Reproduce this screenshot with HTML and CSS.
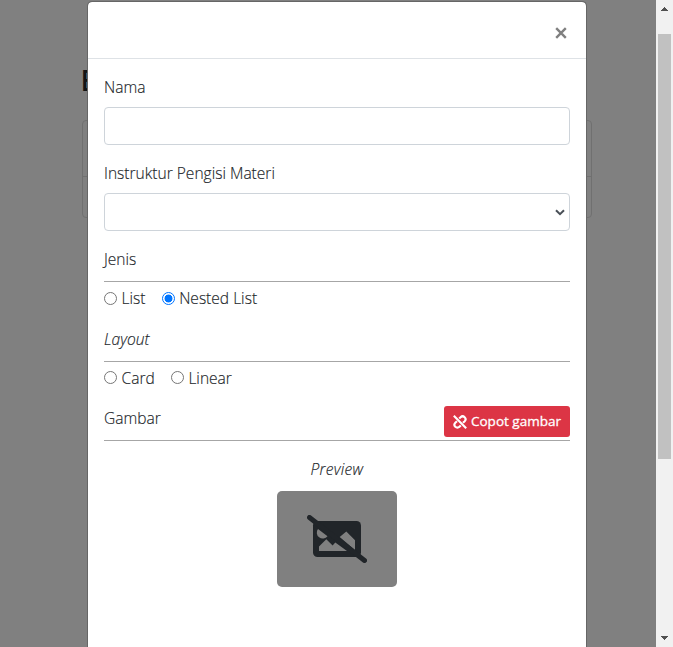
FILE: index.html
```html
<!DOCTYPE html>
<html lang="id">
<head>
<meta charset="utf-8">
<title>Materi</title>
<link rel="stylesheet" href="styles.css">
</head>
<body>
<div class="page">
  <main class="content">
    <h1 class="title">B</h1>
    <section class="card"><div class="card-header"></div></section>
  </main>
  <div class="scrollbar">
    <svg class="arrow" viewBox="0 0 7 4" shape-rendering="crispEdges"><path d="M3 0h1v1h1v1h1v1h1v1H0V3h1V2h1V1h1z"/></svg>
    <div class="track"><div class="thumb"></div></div>
    <svg class="arrow" viewBox="0 0 7 4" shape-rendering="crispEdges"><path d="M0 0h7v1H6v1H5v1H4v1H3V3H2V2H1V1H0z"/></svg>
  </div>
</div>
<div class="modal">
  <header class="modal-header">
    <button class="close" aria-label="Tutup"><svg viewBox="0 0 12 12"><path d="M1.200 1.200l9.600 9.600M10.800 1.200l-9.600 9.600"/></svg></button>
  </header>
  <form class="modal-body">
    <div class="group">
      <label for="nama">Nama</label>
      <input class="control" id="nama" type="text">
    </div>
    <div class="group">
      <label>Instruktur Pengisi Materi</label>
      <div class="control select"><svg viewBox="0 0 10 7"><path d="M1 1.200l4 4 4-4"/></svg></div>
    </div>
    <div class="section jenis">
      <div class="section-title">Jenis</div>
      <div class="options">
        <label class="option"><i class="radio"></i>List</label>
        <label class="option"><i class="radio checked"></i>Nested List</label>
      </div>
    </div>
    <div class="section layout">
      <div class="section-title"><em>Layout</em></div>
      <div class="options">
        <label class="option"><i class="radio"></i>Card</label>
        <label class="option"><i class="radio"></i>Linear</label>
      </div>
    </div>
    <div class="image-title">
      <span>Gambar</span>
      <button class="btn" type="button">
        <svg viewBox="0 0 14 14"><path d="M6.200 3.600L7.600 2.200a2.800 2.800 0 0 1 4.100 4L10 7.800M7.800 10.400l-1.400 1.400a2.800 2.800 0 0 1-4.100-4L4 6.200M.8.800l12.400 12.400"/></svg>
        <span>Copot gambar</span>
      </button>
    </div>
    <div class="preview">
      <em class="caption">Preview</em>
      <div class="thumbnail">
        <svg viewBox="0 0 60 48">
          <rect x="6" y="6" width="48" height="36" rx="4.500"/>
          <path class="hole" d="M12 36v-4.500l7.300-7.300 6.300 6.300 2.700-3L40 36zM32.700 22l6.600-5.500 8.700 8.800V35zM11 14l9.500 7.200A5.200 5.200 0 0 1 11 14z"/>
          <path class="slash" d="M2.500 2.500l55 43"/>
        </svg>
      </div>
    </div>
  </form>
</div>
</body>
</html>
```
FILE: styles.css
```css
* { box-sizing: border-box; }
body {
  margin: 0;
  height: 647px;
  overflow: hidden;
  position: relative;
  color: #212529;
  background: #808080;
  font: 300 15.55px/24px "Open Sans", "Noto Sans", sans-serif;
  -webkit-text-stroke: .15px;
}
.page { display: flex; height: 647px; }
.content { flex: 1; padding: 62px 64px 0 82px; }
.title { margin: 0 0 22px -1.5px; font-size: 28px; line-height: 36px; font-weight: 600; color: #111315; -webkit-text-stroke: 0; }
.card { height: 98px; border: 1px solid #707070; border-radius: 4px; }
.card-header { height: 56px; border-bottom: 1px solid #707070; }
.scrollbar {
  width: 17px;
  background: #f1f1f1;
  display: flex;
  flex-direction: column;
  align-items: center;
  padding: 7px 0;
}
.arrow { width: 7px; height: 4px; fill: #505050; }
.track { flex: 1; width: 13px; padding-top: 23px; }
.thumb { height: 425px; background: #c1c1c1; }
.modal {
  position: absolute;
  left: 87px;
  top: 1px;
  width: 500px;
  height: 646px;
  background: #fff;
  background-clip: padding-box;
  border: 1px solid #666;
  border-bottom: 0;
  border-radius: 5px 5px 0 0;
}
.modal-header {
  height: 57px;
  border-bottom: 1px solid #dee2e6;
  display: flex;
  justify-content: flex-end;
  align-items: center;
  padding: 5px 19px 0 0;
}
.close { width: 12px; height: 12px; padding: 0; border: 0; background: none; display: flex; }
.close svg { width: 12px; height: 12px; fill: none; stroke: #808080; stroke-width: 2.4; }
.modal-body { padding: 16px; }
.group { height: 86px; }
.group label { display: block; height: 32px; }
.control {
  display: block;
  width: 100%;
  height: 38px;
  border: 1px solid #ced4da;
  border-radius: 4px;
  background: #fff;
}
.select { display: flex; align-items: center; justify-content: flex-end; padding-right: 4px; }
.select svg { width: 10px; height: 7px; fill: none; stroke: #495057; stroke-width: 2; }
.section { height: 80px; }
.section-title { height: 35px; border-bottom: 1px solid #a6a6a6; }
.layout { height: 79px; }
.options { display: flex; gap: 16px; padding-top: 4px; }
.option { display: flex; align-items: center; gap: 4.6px; height: 24px; }
.radio { width: 13px; height: 13px; border: 1px solid #767676; border-radius: 50%; background: #fff; }
.jenis .radio { margin-top: 1px; }
.layout .radio { margin-bottom: 1px; }
.checked { border-color: #0075ff; background: radial-gradient(circle, #0075ff 3.6px, #fff 4.3px); }
.image-title {
  height: 35px;
  border-bottom: 1px solid #a6a6a6;
  display: flex;
  justify-content: space-between;
}
.btn {
  width: 126px;
  height: 31px;
  padding: 0 8px 0 9px;
  border: 0;
  border-radius: 3px;
  background: #dc3545;
  color: #fff;
  display: flex;
  align-items: center;
  gap: 4px;
  white-space: nowrap;
  font: 400 13.5px/21px "Open Sans", "Noto Sans", sans-serif;
  -webkit-text-stroke: .3px;
}
.btn svg { flex: none; width: 14px; height: 14px; fill: none; stroke: #fff; stroke-width: 2.1; }
.preview { padding-top: 16px; display: flex; flex-direction: column; align-items: center; }
.caption { letter-spacing: .3px; }
.thumbnail {
  width: 120px;
  height: 96px;
  margin-top: 10px;
  border-radius: 5px;
  background: #808080;
  display: flex;
  align-items: center;
  justify-content: center;
}
.thumbnail svg { width: 60px; height: 48px; fill: #212529; }
.thumbnail .hole { fill: #808080; }
.thumbnail .slash { stroke: #212529; stroke-width: 5; stroke-linecap: round; }
```
